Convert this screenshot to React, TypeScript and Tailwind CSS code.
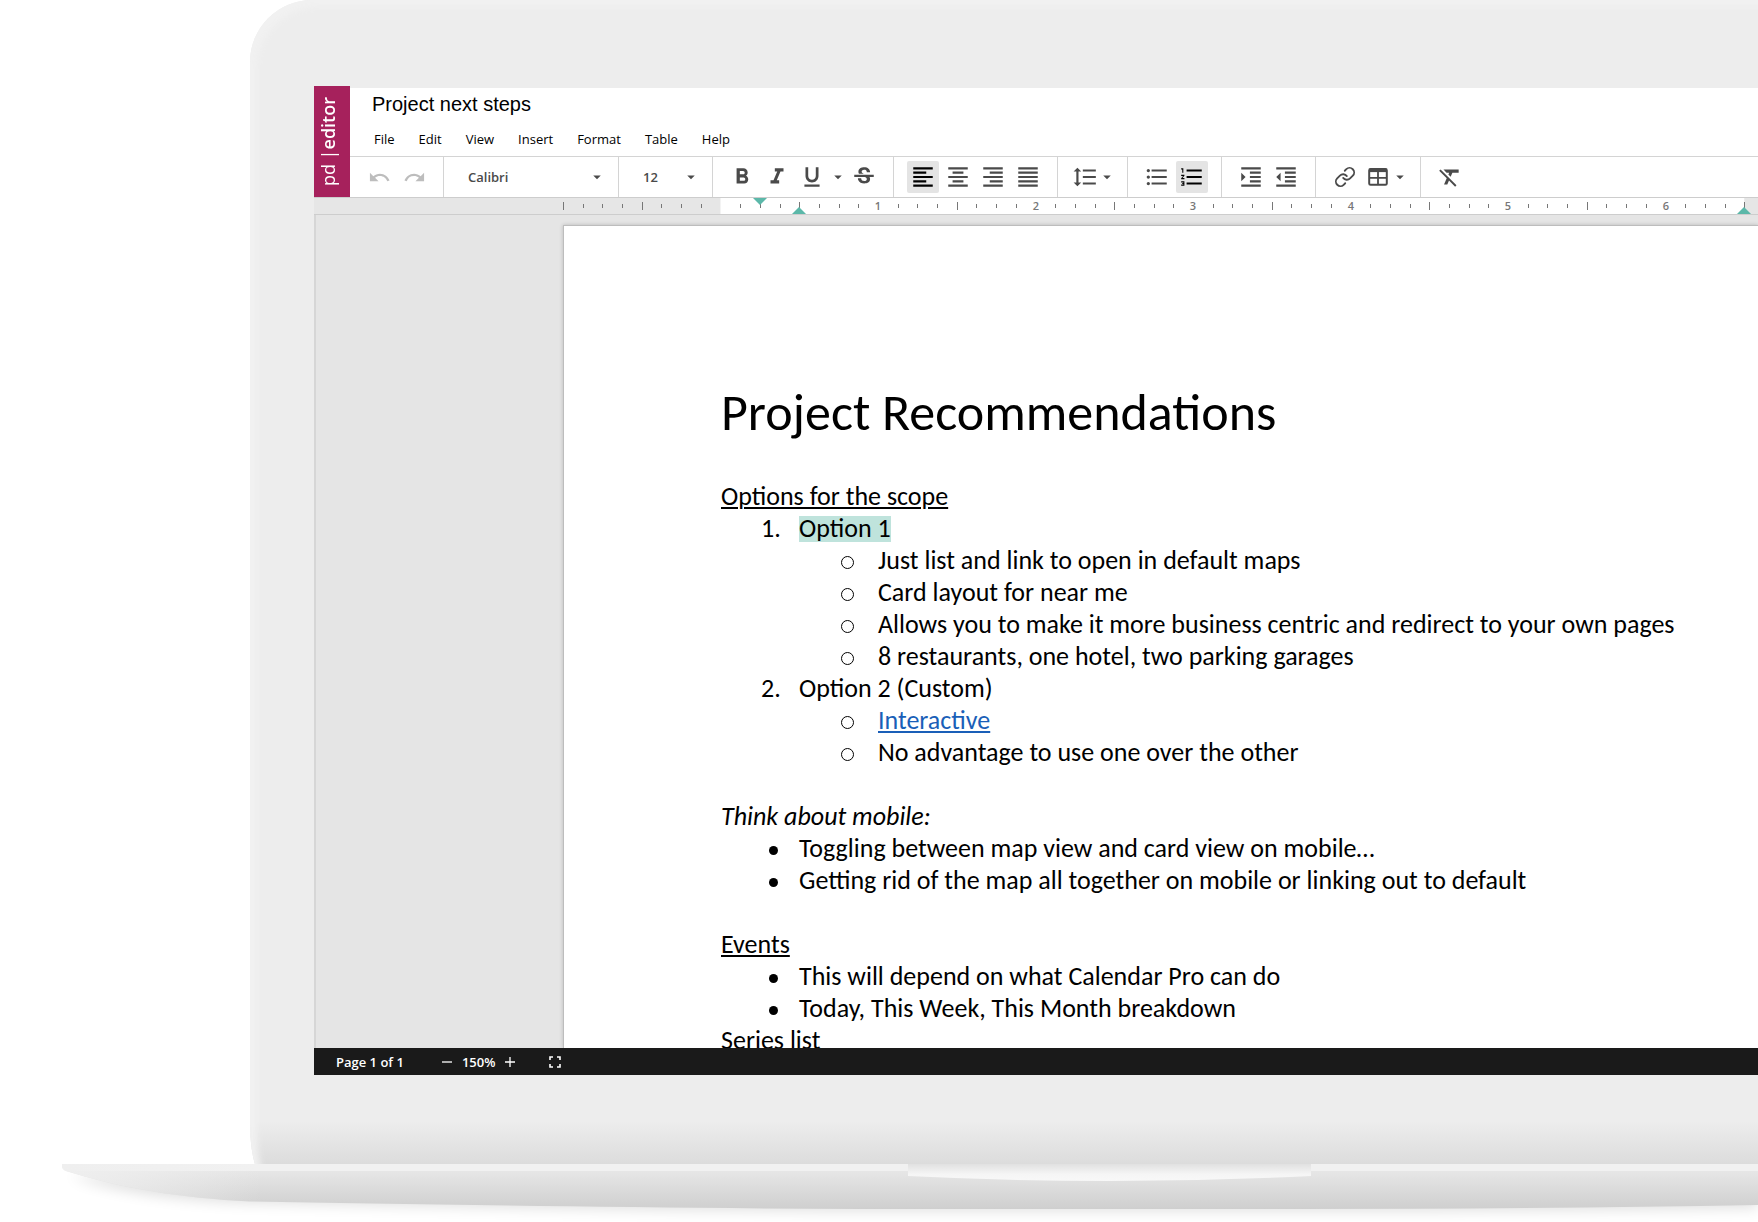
import type { ReactNode } from "react";
import { Link } from "lucide-react";
import {
  MdArrowDropDown,
  MdFormatAlignCenter,
  MdFormatAlignJustify,
  MdFormatAlignLeft,
  MdFormatAlignRight,
  MdFormatBold,
  MdFormatClear,
  MdFormatIndentDecrease,
  MdFormatIndentIncrease,
  MdFormatItalic,
  MdFormatLineSpacing,
  MdFormatListBulleted,
  MdFormatListNumbered,
  MdFormatUnderlined,
  MdRedo,
  MdStrikethroughS,
  MdUndo,
} from "react-icons/md";

const menus = ["File", "Edit", "View", "Insert", "Format", "Table", "Help"];

// ruler, in pixels
const INCH = 157.5;
const ticks = Array.from({ length: 61 }, (_, i) => i - 8);

const TableIcon = () => (
  <svg width="20" height="20" viewBox="0 0 20 20" fill="none" stroke="currentColor">
    <rect x="1.2" y="2" width="17.6" height="15.8" rx="1.4" strokeWidth="2" />
    <path d="M1 3.4h18" strokeWidth="3.4" />
    <path d="M1 10.8h18M10 4v14" strokeWidth="1.8" />
  </svg>
);

const FullscreenIcon = () => (
  <svg width="12" height="12" viewBox="0 0 12 12" fill="none" stroke="currentColor" strokeWidth="1.6">
    <path d="M1 4V1h3M8 1h3v3M11 8v3H8M4 11H1V8" />
  </svg>
);

const ToolButton = ({
  label,
  active,
  narrow,
  disabled,
  children,
}: {
  label: string;
  active?: boolean;
  narrow?: boolean;
  disabled?: boolean;
  children: ReactNode;
}) => (
  <button
    aria-label={label}
    disabled={disabled}
    className={`h-8 shrink-0 rounded-xs flex items-center justify-center ${
      narrow ? "w-7" : "w-8"
    } ${active ? "bg-[#e4e4e4] text-black" : disabled ? "text-[#bdbdbd]" : "text-[#4a4a4a]"}`}
  >
    {children}
  </button>
);

const Caret = ({ label }: { label: string }) => (
  <button
    aria-label={label}
    className="w-3.5 h-8 shrink-0 flex items-center justify-center text-[#4a4a4a]"
  >
    <MdArrowDropDown size={18} className="shrink-0" />
  </button>
);

const Group = ({ children, last }: { children: ReactNode; last?: boolean }) => (
  <div
    className={`flex shrink-0 items-center gap-[3px] px-[13px] ${
      last ? "" : "border-r border-[#d4d4d4]"
    }`}
  >
    {children}
  </div>
);

const Picker = ({
  label,
  value,
  options,
  className,
}: {
  label: string;
  value: string;
  options: string[];
  className: string;
}) => (
  <div className={`relative shrink-0 border-r border-[#d4d4d4] text-[#4a4a4a] ${className}`}>
    <select
      aria-label={label}
      defaultValue={value}
      className="w-full h-full appearance-none bg-transparent pl-6 pr-8 pt-px text-[13px] font-semibold"
    >
      {options.map((option) => (
        <option key={option}>{option}</option>
      ))}
    </select>
    <MdArrowDropDown
      size={18}
      className="absolute right-3 top-1/2 -translate-y-1/2 pointer-events-none"
    />
  </div>
);

const Ruler = () => (
  <div className="h-[18px] shrink-0 bg-[#e6e6e6] border-y border-[#cdcdcd] pl-[249px] overflow-hidden">
    <svg width="1260" height="16" className="block">
      <rect x={INCH} y="0" width={INCH * 6.5} height="16" fill="#fff" />
      {ticks.map((n) => {
        const x = Math.round(INCH + (n * INCH) / 8);
        if (n === 0 || n > 52) return null;
        if (n > 0 && n % 8 === 0) {
          return (
            <text
              key={n}
              x={x}
              y="12"
              textAnchor="middle"
              className="text-[11px] font-semibold fill-[#777]"
            >
              {n / 8}
            </text>
          );
        }
        const long = n % 4 === 0;
        return (
          <rect key={n} x={x} y={long ? 4 : 6} width="1" height={long ? 8 : 4} fill="#777" />
        );
      })}
      <path d="M190 0h14l-7 7z" fill="#5bb8a9" />
      <path d="M229 16h14l-7-7z" fill="#5bb8a9" />
      <path d="M1174 16h14l-7-7z" fill="#5bb8a9" />
    </svg>
  </div>
);

const Numbered = ({ n, children }: { n: number; children: ReactNode }) => (
  <div className="flex pl-10">
    <span className="w-[38px] shrink-0">{n}.</span>
    <span>{children}</span>
  </div>
);

const Circle = ({ children }: { children: ReactNode }) => (
  <li className="flex items-center pl-[120px]">
    <span className="w-[13px] h-[13px] mt-1 mr-6 shrink-0 rounded-full border border-black" />
    <span>{children}</span>
  </li>
);

const Bullet = ({ children }: { children: ReactNode }) => (
  <li className="flex items-center pl-12">
    <span className="w-[9px] h-[9px] mt-1 mr-[21px] shrink-0 rounded-full bg-black" />
    <span>{children}</span>
  </li>
);

const LaptopBase = () => (
  <svg
    viewBox="0 0 1758 58"
    preserveAspectRatio="none"
    className="relative w-full h-[58px] shrink-0 overflow-visible"
  >
    <defs>
      <linearGradient id="base" x1="0" y1="0" x2="0" y2="1">
        <stop offset="0" stopColor="#ebebeb" />
        <stop offset="1" stopColor="#cecece" />
      </linearGradient>
      <linearGradient id="notch" x1="0" y1="0" x2="0" y2="1">
        <stop offset="0" stopColor="#e1e1e1" />
        <stop offset="0.6" stopColor="#f5f5f5" />
        <stop offset="1" stopColor="#f8f8f8" />
      </linearGradient>
      <linearGradient id="edge" x1="0" y1="0" x2="1" y2="0">
        <stop offset="0" stopColor="#efefef" />
        <stop offset="1" stopColor="#efefef" stopOpacity="0" />
      </linearGradient>
      <filter id="soft" x="-10%" y="-100%" width="120%" height="300%">
        <feGaussianBlur stdDeviation="7" />
      </filter>
      <clipPath id="shape">
        <path d="M62 0H1758V41Q1540 45 1300 45H860C640 44 400 40 250 37.500C180 34 120 24 66 7Q62 5 62 2Z" />
      </clipPath>
    </defs>
    <path
      d="M70 12H1758V44Q1540 47 1300 47H860C640 46 400 42 250 39C180 37 110 27 70 12Z"
      fill="#000"
      opacity="0.12"
      filter="url(#soft)"
    />
    <g clipPath="url(#shape)">
      <rect x="62" y="0" width="1696" height="46" fill="url(#base)" />
      <rect x="62" y="0" width="1696" height="7" fill="#f1f1f1" />
      <rect x="62" y="0" width="200" height="46" fill="url(#edge)" />
    </g>
    <path d="M908 0H1311V12Q1110 22 908 12Z" fill="url(#notch)" />
  </svg>
);

const App = () => {
  return (
    <div className="h-screen flex flex-col overflow-hidden bg-white font-['Open_Sans',sans-serif] text-black">
      {/* Laptop lid */}
      <div className="flex-1 min-h-0 ml-[250px] -mb-[21px] pl-16 pt-[86px] pb-[110px] flex rounded-tl-[62px] [border-bottom-left-radius:20px_60px] bg-[linear-gradient(to_top,#dcdcdc_21px,#ededed_64px)] shadow-[inset_7px_7px_6px_#f1f1f1]">
        {/* Editor */}
        <div className="relative flex-1 min-w-0 flex flex-col">
          <header className="flex shrink-0">
            <div className="w-9 shrink-0 pr-2 bg-[#a6215c] text-white flex items-center justify-center">
              <div className="[writing-mode:vertical-rl] rotate-180 text-lg leading-7 whitespace-nowrap">
                pd |<span className="font-semibold">editor</span>
              </div>
            </div>
            <div className="flex-1 min-w-0 mt-0.5 bg-white">
              <h1 className="pl-[22px] pt-1 h-8 font-['Liberation_Sans',sans-serif] text-xl leading-6">
                Project next steps
              </h1>
              {/* Menus */}
              <nav className="h-9 pl-6 pt-0.5 flex items-center gap-6 text-[13px] leading-5">
                {menus.map((menu) => (
                  <button key={menu}>{menu}</button>
                ))}
              </nav>
              {/* Toolbar */}
              <div className="h-[41px] flex border-t border-[#d4d4d4]">
                <Group>
                  <ToolButton label="Undo" disabled>
                    <MdUndo size={23} />
                  </ToolButton>
                  <ToolButton label="Redo" disabled>
                    <MdRedo size={23} />
                  </ToolButton>
                </Group>
                <Picker
                  label="Font"
                  value="Calibri"
                  options={["Arial", "Calibri", "Georgia"]}
                  className="w-[175px]"
                />
                <Picker
                  label="Font size"
                  value="12"
                  options={["10", "11", "12", "14"]}
                  className="w-[94px]"
                />
                <Group>
                  <ToolButton label="Bold">
                    <MdFormatBold size={26} />
                  </ToolButton>
                  <ToolButton label="Italic">
                    <MdFormatItalic size={26} />
                  </ToolButton>
                  <ToolButton label="Underline">
                    <MdFormatUnderlined size={26} />
                  </ToolButton>
                  <Caret label="Underline styles" />
                  <ToolButton label="Strikethrough">
                    <MdStrikethroughS size={26} />
                  </ToolButton>
                </Group>
                <Group>
                  <ToolButton label="Align left" active>
                    <MdFormatAlignLeft size={26} />
                  </ToolButton>
                  <ToolButton label="Align center">
                    <MdFormatAlignCenter size={26} />
                  </ToolButton>
                  <ToolButton label="Align right">
                    <MdFormatAlignRight size={26} />
                  </ToolButton>
                  <ToolButton label="Justify">
                    <MdFormatAlignJustify size={26} />
                  </ToolButton>
                </Group>
                <Group>
                  <div className="flex gap-px">
                    <ToolButton label="Line spacing" narrow>
                      <MdFormatLineSpacing size={26} />
                    </ToolButton>
                    <Caret label="Line spacing options" />
                  </div>
                </Group>
                <Group>
                  <ToolButton label="Bulleted list">
                    <MdFormatListBulleted size={26} />
                  </ToolButton>
                  <ToolButton label="Numbered list" active>
                    <MdFormatListNumbered size={26} />
                  </ToolButton>
                </Group>
                <Group>
                  <ToolButton label="Increase indent">
                    <MdFormatIndentIncrease size={26} />
                  </ToolButton>
                  <ToolButton label="Decrease indent">
                    <MdFormatIndentDecrease size={26} />
                  </ToolButton>
                </Group>
                <Group>
                  <ToolButton label="Insert link">
                    <Link size={22} strokeWidth={2} />
                  </ToolButton>
                  <div className="flex gap-px">
                    <ToolButton label="Insert table" narrow>
                      <TableIcon />
                    </ToolButton>
                    <Caret label="Table options" />
                  </div>
                </Group>
                <Group last>
                  <ToolButton label="Clear formatting">
                    <MdFormatClear size={26} />
                  </ToolButton>
                </Group>
              </div>
            </div>
          </header>

          <Ruler />

          {/* Document */}
          <main className="flex-1 min-h-0 overflow-hidden bg-[#e5e5e5] border-l-2 border-[#d6d6d6] pl-[247px] pt-[10px]">
            <article className="h-full pl-[157px] pt-[154px] bg-white border-t border-l border-[#bdbdbd] shadow-[0_0_4px_rgba(0,0,0,0.2)] font-[Carlito,Lato,sans-serif] text-[26px] leading-8 whitespace-nowrap">
              <h2 className="text-[52px] leading-16">Project Recommendations</h2>
              <p className="mt-9 underline decoration-2 underline-offset-2">Options for the scope</p>
              <ol>
                <li>
                  <Numbered n={1}>
                    <mark className="inline-block pb-0.5 leading-6 bg-[#bfe3dc] text-black">
                      Option 1
                    </mark>
                  </Numbered>
                  <ul>
                    <Circle>Just list and link to open in default maps</Circle>
                    <Circle>Card layout for near me</Circle>
                    <Circle>
                      Allows you to make it more business centric and redirect to your own pages
                    </Circle>
                    <Circle>8 restaurants, one hotel, two parking garages</Circle>
                  </ul>
                </li>
                <li>
                  <Numbered n={2}>Option 2 (Custom)</Numbered>
                  <ul>
                    <Circle>
                      <a
                        href="#interactive"
                        className="text-[#1a5fb8] underline decoration-2 underline-offset-2"
                      >
                        Interactive
                      </a>
                    </Circle>
                    <Circle>No advantage to use one over the other</Circle>
                  </ul>
                </li>
              </ol>
              <p className="mt-8 italic">Think about mobile:</p>
              <ul>
                <Bullet>Toggling between map view and card view on mobile…</Bullet>
                <Bullet>Getting rid of the map all together on mobile or linking out to default</Bullet>
              </ul>
              <p className="mt-8 underline decoration-2 underline-offset-2">Events</p>
              <ul>
                <Bullet>This will depend on what Calendar Pro can do</Bullet>
                <Bullet>Today, This Week, This Month breakdown</Bullet>
              </ul>
              <p>Series list</p>
            </article>
          </main>

          {/* Status bar */}
          <footer className="relative h-[27px] shrink-0 bg-[#1a1a1a] text-white flex items-center pl-[22px] text-[13px] font-semibold leading-5">
            <span>Page 1 of 1</span>
            <div className="ml-[38px] flex items-center gap-2.5">
              <button aria-label="Zoom out" className="w-2.5 h-5 flex items-center">
                <svg viewBox="0 0 10 10" className="w-full" stroke="currentColor">
                  <path d="M0 5h10" strokeWidth="1.3" />
                </svg>
              </button>
              <span>150%</span>
              <button aria-label="Zoom in" className="w-2.5 h-5 flex items-center">
                <svg viewBox="0 0 10 10" className="w-full" stroke="currentColor">
                  <path d="M0 5h10M5 0v10" strokeWidth="1.3" />
                </svg>
              </button>
            </div>
            <button aria-label="Fullscreen" className="ml-[34px]">
              <FullscreenIcon />
            </button>
          </footer>
        </div>
      </div>
      <LaptopBase />
    </div>
  );
};

export default App;
